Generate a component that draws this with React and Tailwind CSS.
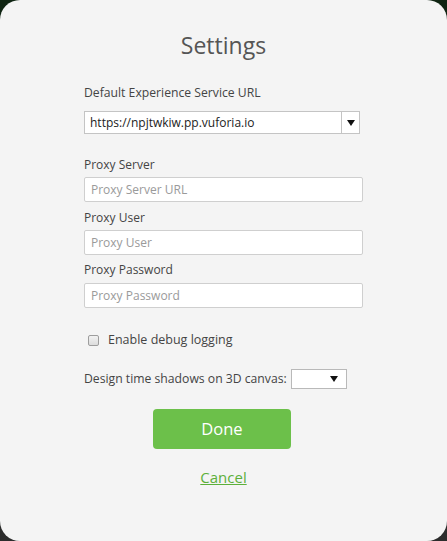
// Settings dialog

const Field = ({ label, placeholder, className = '', inputGap = 'mt-[4px]' }) => (
  <div className={className}>
    <label className="block text-[12px] leading-[16px] text-[#444]">{label}</label>
    <input
      type="text"
      placeholder={placeholder}
      className={`${inputGap} block h-[25px] w-[279px] rounded-[2px] border border-[#cfcfcf] bg-white px-[6px] text-[12px] text-[#333] placeholder:text-[#9a9a9a] outline-none`}
    />
  </div>
);

const Caret = () => (
  <svg width="8" height="6" viewBox="0 0 8 6">
    <path d="M0 0h8L4 6z" fill="#111" />
  </svg>
);

export default function App() {
  return (
    <div
      className="h-[541px] w-[447px] overflow-hidden bg-[linear-gradient(180deg,#0f2412_0%,#1c2a1c_50%,#2c2c2c_100%)]"
      style={{ fontFamily: '"Open Sans", "Noto Sans", sans-serif' }}
    >
      <div className="h-[541px] w-[447px] rounded-[20px] bg-[#f4f4f4]">
        <h1 className="pt-[30px] text-center text-[23px] leading-[30px] text-[#555]">Settings</h1>

        <div className="pl-[84px]">
          <div className="mt-[25px] text-[12.2px] leading-[16px] text-[#444]">Default Experience Service URL</div>
          <div className="mt-[10px] flex h-[23px] w-[276px] border border-[#c4c4c4] bg-white">
            <div className="flex-1 pl-[5px] text-[12px] leading-[21px] text-[#222]">https://npjtwkiw.pp.vuforia.io</div>
            <div className="flex w-[18px] items-center justify-center border-l border-[#c4c4c4]">
              <Caret />
            </div>
          </div>

          <Field className="mt-[23px]" label="Proxy Server" placeholder="Proxy Server URL" />
          <Field className="mt-[8px]" label="Proxy User" placeholder="Proxy User" />
          <Field className="mt-[7px]" inputGap="mt-[5px]" label="Proxy Password" placeholder="Proxy Password" />

          <div className="mt-[24px] flex items-center pl-[4px]">
            <span className="block h-[11px] w-[11px] rounded-[2px] border border-[#9d9d9d] bg-[linear-gradient(180deg,#f2f2f2,#dcdcdc)]" />
            <span className="ml-[9px] text-[12.5px] leading-[16px] text-[#444]">Enable debug logging</span>
          </div>

          <div className="mt-[21px] flex items-center">
            <span className="text-[12.2px] leading-[16px] text-[#444]">Design time shadows on 3D canvas:</span>
            <div className="ml-[4px] flex h-[20px] w-[56px] items-center justify-end border border-[#b9b9b9] bg-white pr-[8px]">
              <Caret />
            </div>
          </div>
        </div>

        <div className="mt-[20px] flex flex-col items-center">
          <button className="mr-[3px] h-[40px] w-[138px] rounded-[4px] bg-[#6cc04a] text-[16.5px] text-white">Done</button>
          <a href="#" className="mt-[18px] text-[15px] leading-[20px] text-[#5cb03a] underline">Cancel</a>
        </div>
      </div>
    </div>
  );
}
